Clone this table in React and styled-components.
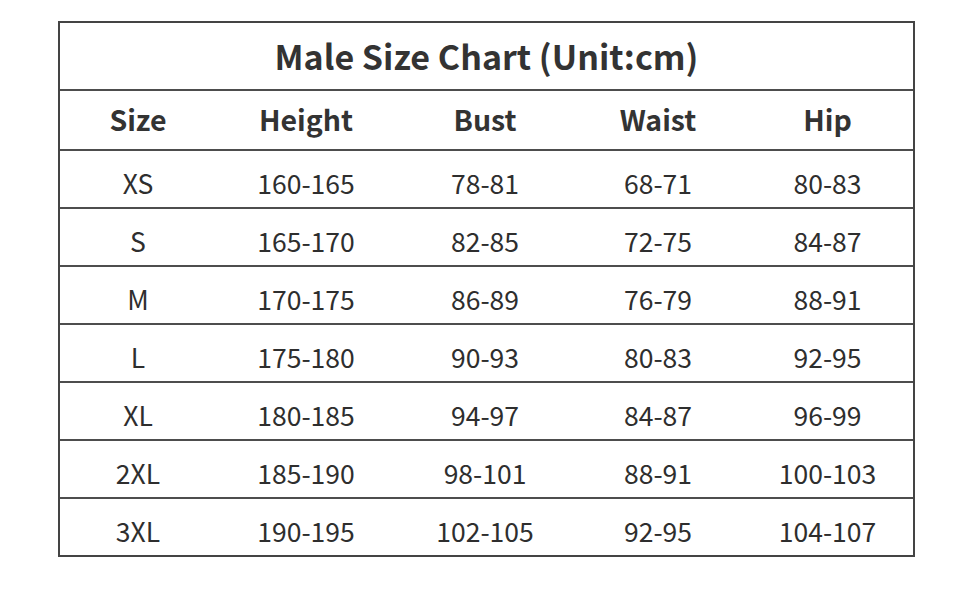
import React from "react";
import styled, { createGlobalStyle } from "styled-components";

const GlobalStyle = createGlobalStyle`
  html, body {
    margin: 0;
    padding: 0;
    background: #ffffff;
  }
  body {
    font-family: "Noto Sans CJK SC", "Noto Sans", sans-serif;
    color: #333333;
  }
`;

const Page = styled.div`
  width: 970px;
  height: 600px;
  padding: 21px 0 0 58px;
  box-sizing: border-box;
`;

const Chart = styled.div`
  width: 857px;
  border: 2px solid #444;
  box-sizing: border-box;
`;

const Title = styled.div`
  height: 66px;
  display: flex;
  align-items: center;
  justify-content: center;
  font-size: 34px;
  font-weight: 700;
  color: #333;
  padding-bottom: 2px;
  box-sizing: border-box;
`;

const Row = styled.div`
  display: grid;
  grid-template-columns: 156px 180px 178px 168px 1fr;
  height: ${(p) => p.$h}px;
  border-top: 2px solid #4d4d4d;
  box-sizing: border-box;
`;

const Cell = styled.div`
  display: flex;
  align-items: center;
  justify-content: center;
  font-size: ${(p) => (p.$head ? 28.5 : 26.5)}px;
  font-weight: ${(p) => (p.$head ? 700 : 400)};
  color: ${(p) => (p.$head ? "#333" : "#2e2e2e")};
  padding-top: ${(p) => (p.$head ? 0 : 6)}px;
  padding-bottom: ${(p) => (p.$head ? 3 : 0)}px;
  box-sizing: border-box;
`;

const headers = ["Size", "Height", "Bust", "Waist", "Hip"];

const rows = [
  ["XS", "160-165", "78-81", "68-71", "80-83"],
  ["S", "165-170", "82-85", "72-75", "84-87"],
  ["M", "170-175", "86-89", "76-79", "88-91"],
  ["L", "175-180", "90-93", "80-83", "92-95"],
  ["XL", "180-185", "94-97", "84-87", "96-99"],
  ["2XL", "185-190", "98-101", "88-91", "100-103"],
  ["3XL", "190-195", "102-105", "92-95", "104-107"],
];

export default function App() {
  return (
    <>
      <GlobalStyle />
      <Page>
        <Chart>
          <Title>Male Size Chart (Unit:cm)</Title>
          <Row $h={60}>
            {headers.map((h) => (
              <Cell key={h} $head>
                {h}
              </Cell>
            ))}
          </Row>
          {rows.map((r) => (
            <Row key={r[0]} $h={58}>
              {r.map((v, i) => (
                <Cell key={i}>{v}</Cell>
              ))}
            </Row>
          ))}
        </Chart>
      </Page>
    </>
  );
}
